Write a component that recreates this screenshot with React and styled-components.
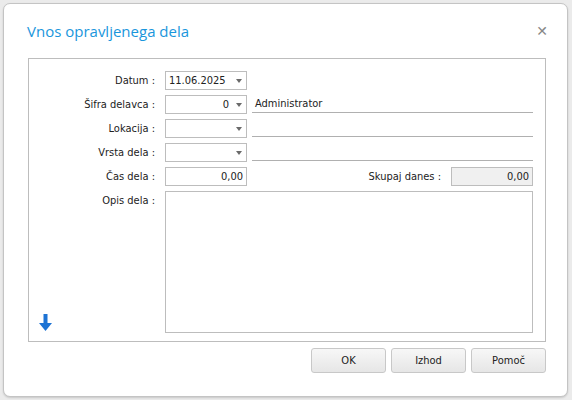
import React from 'react'
import styled, { createGlobalStyle } from 'styled-components'

const GlobalStyle = createGlobalStyle`
    html, body {
        margin: 0;
        padding: 0;
        background: #ebebeb;
    }
    body {
        font-family: "DejaVu Sans Condensed", "DejaVu Sans", sans-serif;
        font-size: 11px;
        color: #222;
    }
`

const Page = styled.div`
    width: 572px;
    height: 400px;
    padding: 3px 4px 3px 3px;
    box-sizing: border-box;
`

const Dialog = styled.div`
    height: 100%;
    background: #fff;
    border: 1px solid #c4c4c4;
    border-radius: 7px;
    box-shadow: 0 1px 2px rgba(0, 0, 0, 0.15);
    box-sizing: border-box;
    display: flex;
    flex-direction: column;
`

const Header = styled.div`
    display: flex;
    align-items: center;
    justify-content: space-between;
    height: 54px;
    padding: 0 19px 0 23px;
`

const Title = styled.h1`
    margin: 0;
    font-family: "Open Sans", "Noto Sans", sans-serif;
    font-weight: 400;
    font-size: 15px;
    color: #1a96dc;
`

const Close = styled.span`
    font-family: "DejaVu Sans", sans-serif;
    font-size: 14px;
    color: #888;
    line-height: 1;
`

const Panel = styled.div`
    margin-left: 24px;
    width: 518px;
    height: 284px;
    border: 1px solid #bdbdbd;
    box-sizing: border-box;
    padding: 12px 12px 8px 0;
    display: flex;
    flex-direction: column;
    gap: 5px;
    position: relative;
`

const Row = styled.div`
    display: flex;
    align-items: ${p => (p.top ? 'flex-start' : 'center')};
    height: ${p => (p.grow ? 'auto' : '19px')};
    flex: ${p => (p.grow ? '1' : 'none')};
`

const Label = styled.label`
    width: 126px;
    text-align: right;
    padding-right: 10px;
    flex: none;
    white-space: nowrap;
    margin-top: ${p => (p.top ? '3px' : '0')};
`

const Field = styled.div`
    width: 82px;
    height: 19px;
    box-sizing: border-box;
    border: 1px solid #bdbdbd;
    background: ${p => (p.readonly ? '#f0f0f0' : '#fff')};
    display: flex;
    align-items: center;
    padding: 0 ${p => (p.combo ? '4px' : '3px')} 0 3px;
    flex: none;
`

const Value = styled.span`
    flex: 1;
    text-align: ${p => (p.right ? 'right' : 'left')};
`

const Caret = styled.span`
    width: 0;
    height: 0;
    margin-left: 7px;
    border-left: 3.5px solid transparent;
    border-right: 3.5px solid transparent;
    border-top: 4px solid #6a6a6a;
`

const Linked = styled.div`
    margin-left: 5px;
    flex: 1;
    height: 17px;
    border-bottom: 1px solid #b0b0b0;
    padding-left: 3px;
    box-sizing: border-box;
    line-height: 15px;
`

const Spacer = styled.div`
    flex: 1;
`

const SideLabel = styled.span`
    margin-right: 10px;
`

const Memo = styled.div`
    flex: 1;
    align-self: stretch;
    border: 1px solid #bdbdbd;
`

const ArrowIcon = styled.svg`
    position: absolute;
    left: 10px;
    bottom: 10px;
`

const Footer = styled.div`
    display: flex;
    justify-content: flex-end;
    gap: 5px;
    padding: 6px 21px 0 0;
`

const Button = styled.button`
    width: 75px;
    height: 25px;
    border: 1px solid #c8c8c8;
    border-radius: 3px;
    background: linear-gradient(#f7f7f7, #e6e6e6);
    font-family: "DejaVu Sans Condensed", "DejaVu Sans", sans-serif;
    font-size: 11px;
    color: #222;
    padding: 0;
`

const Combo = ({ value, right }) => (
    <Field combo>
        <Value right={right}>{value}</Value>
        <Caret />
    </Field>
)

export default function App() {
    return (
        <Page>
            <GlobalStyle />
            <Dialog>
                <Header>
                    <Title>Vnos opravljenega dela</Title>
                    <Close>✕</Close>
                </Header>
                <Panel>
                    <Row>
                        <Label>Datum :</Label>
                        <Combo value="11.06.2025" />
                    </Row>
                    <Row>
                        <Label>Šifra delavca :</Label>
                        <Combo value="0" right />
                        <Linked>Administrator</Linked>
                    </Row>
                    <Row>
                        <Label>Lokacija :</Label>
                        <Combo value="" />
                        <Linked />
                    </Row>
                    <Row>
                        <Label>Vrsta dela :</Label>
                        <Combo value="" />
                        <Linked />
                    </Row>
                    <Row>
                        <Label>Čas dela :</Label>
                        <Field>
                            <Value right>0,00</Value>
                        </Field>
                        <Spacer />
                        <SideLabel>Skupaj danes :</SideLabel>
                        <Field readonly>
                            <Value right>0,00</Value>
                        </Field>
                    </Row>
                    <Row grow top>
                        <Label top>Opis dela :</Label>
                        <Memo />
                    </Row>
                    <ArrowIcon width="13" height="17" viewBox="0 0 13 17">
                        <path d="M4.5 0h4v9h4.5l-6.5 8-6.5-8h4.5z" fill="#1d73d4" />
                    </ArrowIcon>
                </Panel>
                <Footer>
                    <Button>OK</Button>
                    <Button>Izhod</Button>
                    <Button>Pomoč</Button>
                </Footer>
            </Dialog>
        </Page>
    )
}
